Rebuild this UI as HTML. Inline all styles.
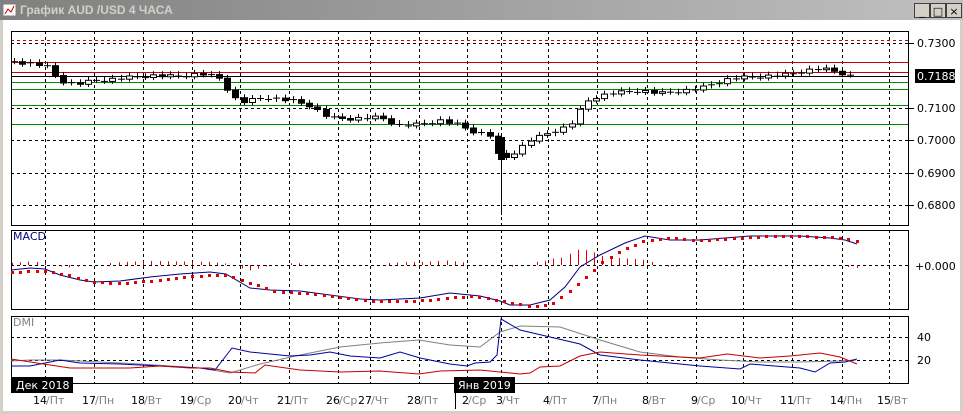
<!DOCTYPE html>
<html><head><meta charset="utf-8"><style>
html,body{margin:0;padding:0;width:963px;height:414px;overflow:hidden;background:#d4d0c8}
#t{position:absolute;left:0;top:0;width:963px;height:20px;background:linear-gradient(90deg,#808080,#c0c0c0);}
#t span{position:absolute;left:20px;top:3px;font:bold 12px "Liberation Sans",sans-serif;color:#d4d0c8}
svg{position:absolute;left:0;top:0}
text{font-family:"DejaVu Sans","Liberation Sans",sans-serif;font-size:11px}
</style></head><body>
<div id="t"><span>График AUD /USD  4 ЧАСА</span></div>
<svg id="s" width="963" height="414" xmlns="http://www.w3.org/2000/svg"></svg>
<script>
(function(){
var s=document.getElementById('s'),h='';
function L(x1,y1,x2,y2,c,d,w){h+='<line x1="'+x1+'" y1="'+y1+'" x2="'+x2+'" y2="'+y2+'" stroke="'+c+'" stroke-width="'+(w||1)+'"'+(d?' stroke-dasharray="3,3"':'')+'/>';}
function R(x,y,w,hh,f,st){h+='<rect x="'+x+'" y="'+y+'" width="'+w+'" height="'+hh+'" fill="'+f+'"'+(st?' stroke="'+st+'"':'')+'/>';}
function T(x,y,t,c,a){h+='<text x="'+x+'" y="'+y+'" fill="'+(c||'#000')+'"'+(a?' text-anchor="'+a+'"':'')+'>'+t+'</text>';}
function P(pts,c,w){h+='<polyline fill="none" stroke="'+c+'" stroke-width="'+(w||1)+'" points="'+pts.map(function(p){return p.join(',')}).join(' ')+'"/>';}
[[914,'_'],[930,'□'],[946,'×']].forEach(function(b){R(b[0]+.5,3.5,15,14,'#d4d0c8','#404040');T(b[0]+8,15,b[1],'#000','middle');});
R(3,4,13,12,'#fff','#808080');P([[5,14],[8,9],[11,12],[14,6]],'#c00');
R(3,20,957,391,'#fff');
var vx=[45,94,143,192,240,289,338,370,419,467,501,548,597,647,696,743,792,842,889];
var lb=['14/Пт','17/Пн','18/Вт','19/Ср','20/Чт','21/Пт','26/Ср','27/Чт','28/Пт','2/Ср','3/Чт','4/Пт','7/Пн','8/Вт','9/Ср','10/Чт','11/Пт','14/Пн','15/Вт'];
var pans=[[31,225],[230,309],[316,383]];
pans.forEach(function(p){vx.forEach(function(x){L(x+.5,p[0],x+.5,p[1],'#000',1);});});
[43,108,140,173,205].forEach(function(y){L(11,y+.5,909,y+.5,'#000',1);});
L(11,265.5,909,265.5,'#000',1);L(11,337.5,909,337.5,'#000',1);L(11,360.5,909,360.5,'#000',1);
L(11,40.5,909,40.5,'#c00',1);
[62,72].forEach(function(y){L(11,y+.5,909,y+.5,'#c00');});
[82,89,105,124].forEach(function(y){L(11,y+.5,909,y+.5,'#080');});
L(11,76.5,909,76.5,'#000');
pans.forEach(function(p){h+='<rect x="11.5" y="'+(p[0]+.5)+'" width="897" height="'+(p[1]-p[0])+'" fill="none" stroke="#000"/>';});
[43,108,140,173,205].forEach(function(y){L(909,y+.5,914,y+.5,'#000');});
T(917,47,'0.7300');T(917,112,'0.7100');T(917,144,'0.7000');T(917,177,'0.6900');T(917,209,'0.6800');
R(915,69,40,14,'#000');T(917,80,'0.7188','#fff');
T(915,270,'+0.000');T(917,341,'40');T(917,364,'20');
T(13,240,'MACD','#000080');T(13,326,'DMI','#808080');
var k=[[12,61],[30,63],[45,65],[60,80],[75,84],[95,80],[120,78],[150,75],[175,76],[200,73],[220,78],[232,95],[240,102],[265,97],[290,100],[310,105],[330,118],[350,118],[380,117],[400,125],[420,124],[440,120],[460,125],[470,130],[490,135],[500,160],[510,155],[530,140],[550,132],[570,125],[580,110],[590,98],[610,93],[640,90],[660,93],[700,88],[730,78],[760,76],[790,74],[805,70],[820,68],[840,72],[852,76]];
function iy(x){for(var i=1;i<k.length;i++){if(x<=k[i][0]){var a=k[i-1],b=k[i];return a[1]+(b[1]-a[1])*(x-a[0])/(b[0]-a[0]);}}return 76;}
var prev=iy(12),n=0;
for(var x=14;x<=852;x+=8.2){n++;var c=iy(x)+((n*7)%5-2)*0.8;var cx=Math.round(x);var tp=Math.min(prev,c),bt=Math.max(prev,c);
L(cx+.5,(tp-3).toFixed(1),cx+.5,(bt+3).toFixed(1),'#000');
if(bt-tp<1.5){L(cx-3,(c+.5).toFixed(1),cx+4,(c+.5).toFixed(1),'#000');}else{R(cx-2.5,(tp+.5).toFixed(1),6,(bt-tp).toFixed(1),c>prev?'#000':'#fff','#000');}
prev=c;}
L(501.5,135,501.5,215,'#000');R(498.5,137.5,6,22,'#000','#000');
var mb=[[11,270],[30,268],[45,269],[60,275],[80,280],[94,282],[120,281],[150,277],[180,274],[210,272],[226,274],[250,288],[270,290],[300,291],[330,295],[360,299],[380,300],[400,299],[420,298],[450,293],[480,296],[500,301],[510,305],[530,305],[550,300],[565,287],[580,267],[600,255],[625,243],[645,236],[670,240],[700,240],[750,236],[800,236],[830,238],[845,240],[857,244]];
function my(x){x=Math.max(x,11);for(var i=1;i<mb.length;i++)if(x<=mb[i][0]){var a=mb[i-1],b=mb[i];return a[1]+(b[1]-a[1])*(x-a[0])/(b[0]-a[0]);}return 244;}
P(mb,'#000080');
for(var x=12;x<=858;x+=8.2){var y=my(x);var y2=(my(x-25)+y)/2+(x<560?2:0);
R(Math.round(x)-1,Math.round(y2)-1,3,3,'#d00');
var hv=(y2-y)*1.1;if(Math.abs(hv)>1.5)L(Math.round(x)+.5,265,Math.round(x)+.5,(265-hv).toFixed(1),'#d00');}
P([[11,361],[30,360],[60,360],[100,362],[140,364],[170,366],[200,368],[230,373],[260,364],[300,355],[340,347],[380,343],[419,340],[450,345],[480,347],[500,332],[520,326],[560,327],[600,340],[640,352],[680,357],[720,360],[760,362],[800,362],[840,361],[856,360]],'#808080');
P([[11,366],[30,366],[60,360],[80,363],[120,364],[160,366],[200,368],[215,370],[232,348],[250,352],[270,354],[290,356],[310,355],[330,352],[350,356],[380,358],[400,352],[420,358],[450,364],[467,366],[475,363],[490,362],[497,355],[501,319],[520,330],[550,337],[580,344],[600,355],[640,360],[700,366],[740,369],[750,364],[800,368],[815,372],[830,363],[845,362],[857,359]],'#0000a0');
P([[11,359],[50,365],[70,368],[100,368],[130,368],[160,366],[190,368],[210,368],[230,372],[255,373],[265,365],[300,370],[340,372],[380,371],[419,374],[440,371],[480,370],[500,372],[520,374],[530,373],[540,367],[560,366],[580,356],[600,352],[640,355],[680,357],[700,358],[727,354],[760,358],[790,356],[820,353],[840,357],[857,364]],'#c00000');
R(11,377,62,16,'#000');T(16,389,'Дек 2018','#fff');
R(454,377,61,16,'#000');T(458,389,'Янв 2019','#fff');
L(455.5,393,455.5,409,'#000');
vx.forEach(function(x,i){var p=lb[i].split('/');h+='<text x="'+(x+2)+'" y="404" text-anchor="end">'+p[0]+'</text><text x="'+(x+1)+'" y="404" fill="#808080">/'+p[1]+'</text>';});
s.innerHTML=h;
})();
</script>
</body></html>
